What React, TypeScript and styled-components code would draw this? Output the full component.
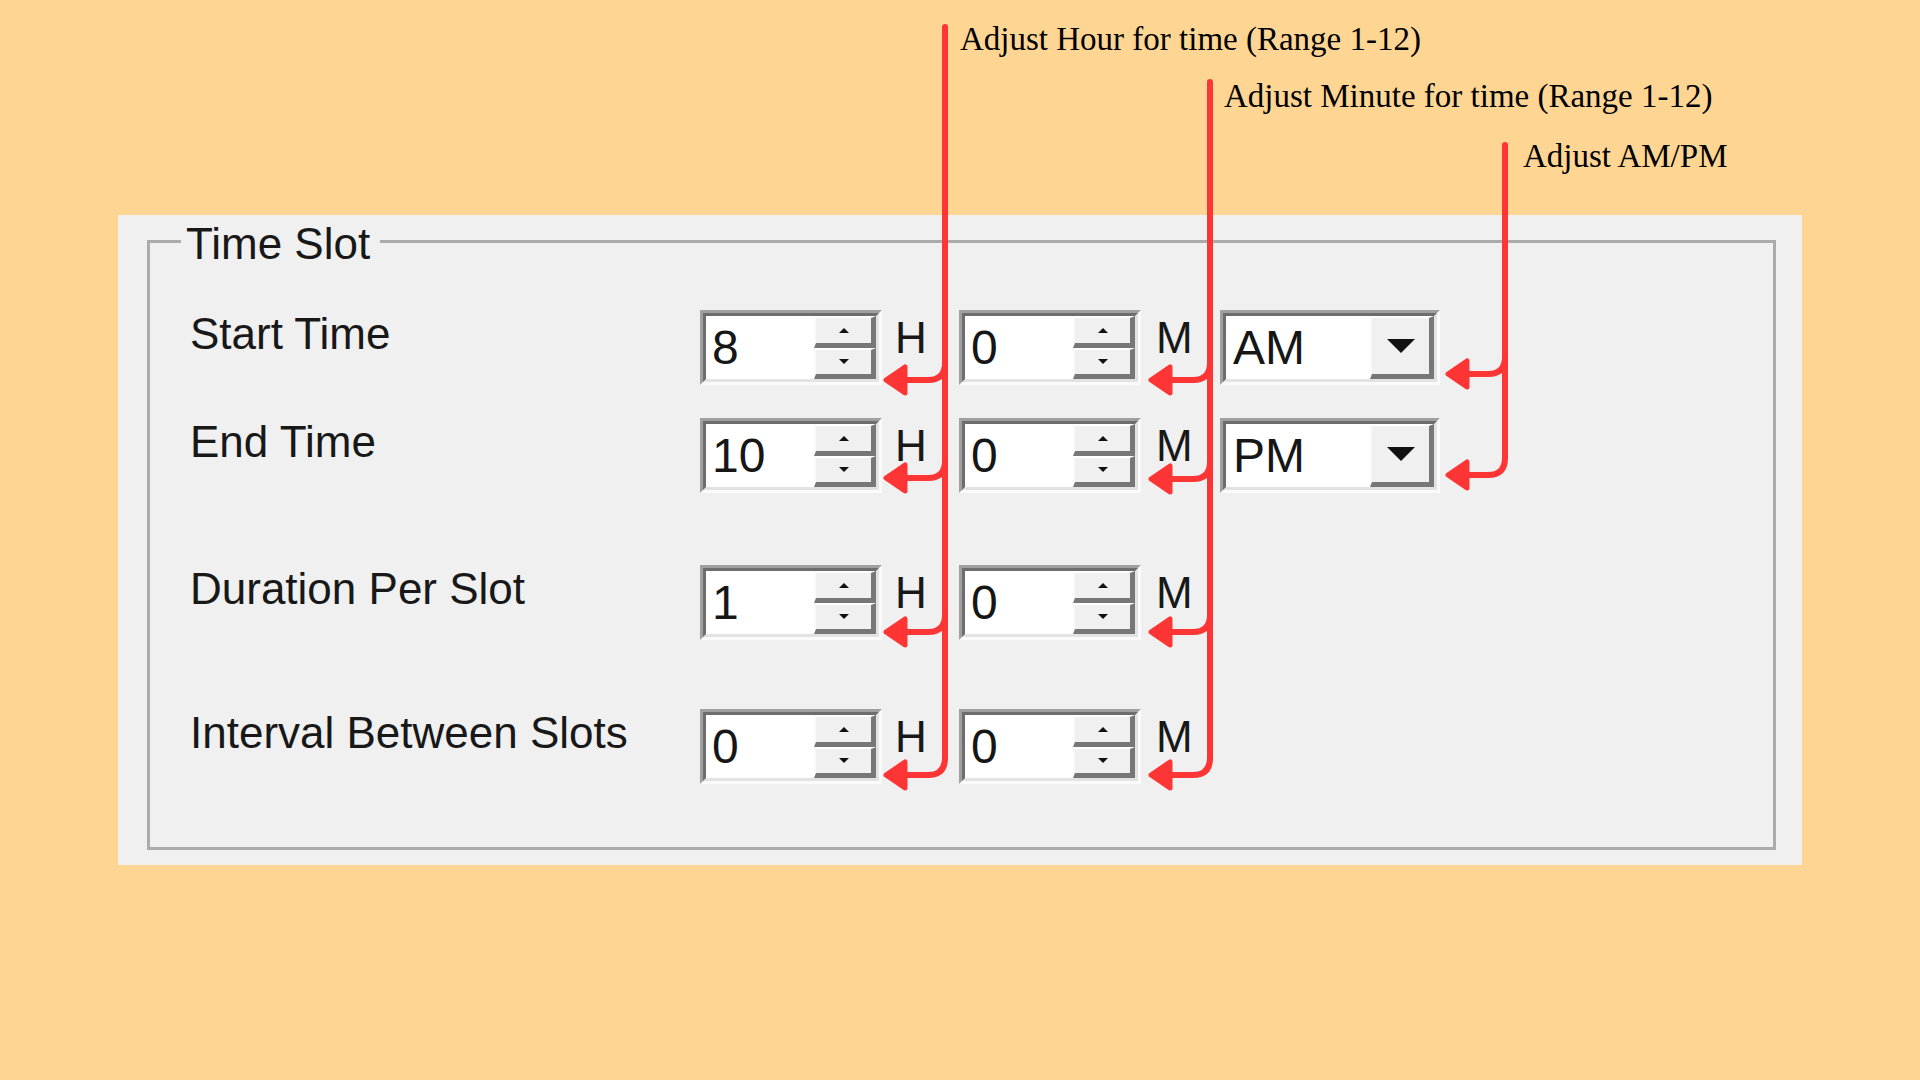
import React from "react";
import styled, { createGlobalStyle } from "styled-components";

const GlobalStyle = createGlobalStyle`
  html, body {
    margin: 0;
    padding: 0;
    background: #ffd593;
  }
  * { box-sizing: border-box; }
`;

const RED = "#fe3535";

const Page = styled.div`
  position: relative;
  width: 1920px;
  height: 1080px;
  background: #ffd593;
  overflow: hidden;
`;

const Callouts = styled.div`
  height: 215px;
  padding-top: 20px;
  display: flex;
  flex-direction: column;
`;

const Note = styled.div<{ $indent: number; $gap: number }>`
  padding-left: ${p => p.$indent}px;
  margin-top: ${p => p.$gap}px;
  font-family: "Liberation Serif", "Times New Roman", serif;
  font-size: 33px;
  line-height: 38px;
  color: #000;
  white-space: nowrap;
`;

const Panel = styled.div`
  margin-left: 118px;
  width: 1684px;
  height: 650px;
  background: #f0f0f0;
  padding: 1px 26px 15px 29px;
`;

const Group = styled.fieldset`
  margin: 0;
  padding: 0 0 63px 0;
  border: 3px solid #ababab;
  min-width: 0;
`;

const Legend = styled.legend`
  margin-left: 31px;
  padding: 6px 10px 0 5px;
  font-family: "Liberation Sans", Arial, sans-serif;
  font-size: 44px;
  line-height: 44px;
  color: #181818;
`;

const Body = styled.div`
  display: flex;
  flex-direction: column;
  padding-left: 40px;
`;

const Row = styled.div<{ $gap: number }>`
  display: flex;
  align-items: flex-start;
  height: 75px;
  margin-top: ${p => p.$gap}px;
`;

const Label = styled.div`
  width: 510px;
  margin-top: -1px;
  font-family: "Liberation Sans", Arial, sans-serif;
  font-size: 44px;
  line-height: 50px;
  color: #181818;
  white-space: nowrap;
`;

const SunkenOuter = styled.div<{ $width: number }>`
  width: ${p => p.$width}px;
  height: 75px;
  border-style: solid;
  border-width: 3px;
  border-color: #a0a0a0 #fbfbfb #fbfbfb #a0a0a0;
`;

const SunkenInner = styled.div`
  display: flex;
  height: 100%;
  border-style: solid;
  border-width: 3px;
  border-color: #6d6d6d #e3e3e3 #e3e3e3 #6d6d6d;
  background: #fff;
`;

const Value = styled.div`
  flex: 1;
  padding-left: 6px;
  font-family: "Liberation Sans", Arial, sans-serif;
  font-size: 48px;
  line-height: 63px;
  color: #161616;
`;

const SpinColumn = styled.div`
  width: 62px;
  display: flex;
  flex-direction: column;
`;

const RaisedButton = styled.div<{ $width?: number }>`
  flex: 1;
  ${p => (p.$width ? `width: ${p.$width}px; flex: none;` : "")}
  display: flex;
  align-items: center;
  justify-content: center;
  background: #f0f0f0;
  border-style: solid;
  border-width: 2px 5px 5px 2px;
  border-color: #ffffff #777777 #777777 #fafafa;
`;

const Arrow = styled.span<{ $dir: "up" | "down"; $size: number; $h: number }>`
  width: 0;
  height: 0;
  border-left: ${p => p.$size}px solid transparent;
  border-right: ${p => p.$size}px solid transparent;
  ${p =>
    p.$dir === "up"
      ? `border-bottom: ${p.$h}px solid #111;`
      : `border-top: ${p.$h}px solid #111;`}
`;

const Unit = styled.div<{ $gap: number }>`
  width: 64px;
  margin-left: ${p => p.$gap}px;
  margin-top: 3px;
  font-family: "Liberation Sans", Arial, sans-serif;
  font-size: 44px;
  line-height: 50px;
  color: #181818;
`;

const ComboText = styled(Value)`
  padding-left: 7px;
`;

const Overlay = styled.svg`
  position: absolute;
  left: 0;
  top: 0;
  pointer-events: none;
`;

function SpinBox({ value }: { value: string }) {
  return (
    <SunkenOuter $width={182}>
      <SunkenInner>
        <Value>{value}</Value>
        <SpinColumn>
          <RaisedButton>
            <Arrow $dir="up" $size={5} $h={5} />
          </RaisedButton>
          <RaisedButton>
            <Arrow $dir="down" $size={5} $h={5} />
          </RaisedButton>
        </SpinColumn>
      </SunkenInner>
    </SunkenOuter>
  );
}

function Combo({ value }: { value: string }) {
  return (
    <SunkenOuter $width={220}>
      <SunkenInner>
        <ComboText>{value}</ComboText>
        <RaisedButton $width={64}>
          <Arrow $dir="down" $size={14} $h={14} />
        </RaisedButton>
      </SunkenInner>
    </SunkenOuter>
  );
}

type Leader = { x: number; top: number; rows: number[]; tip: number };

const leaders: Leader[] = [
  { x: 945, top: 27, rows: [380, 478, 632, 775], tip: 883 },
  { x: 1210, top: 82, rows: [380, 479, 632, 775], tip: 1148 },
  { x: 1505, top: 145, rows: [374, 475], tip: 1445 },
];

function LeaderLine({ x, top, rows, tip }: Leader) {
  const r = 17;
  const back = tip + 22;
  const last = rows[rows.length - 1];
  return (
    <g>
      <path
        d={`M${x} ${top} V${last - r} Q${x} ${last} ${x - r} ${last} H${back}`}
        fill="none"
        stroke={RED}
        strokeWidth={6}
        strokeLinecap="round"
      />
      {rows.slice(0, -1).map(y => (
        <path
          key={y}
          d={`M${x} ${y - r} Q${x} ${y} ${x - r} ${y} H${back}`}
          fill="none"
          stroke={RED}
          strokeWidth={6}
          strokeLinecap="round"
        />
      ))}
      {rows.map(y => (
        <polygon
          key={"a" + y}
          points={`${tip + 3},${y} ${back},${y - 13} ${back},${y + 13}`}
          fill={RED}
          stroke={RED}
          strokeWidth={5}
          strokeLinejoin="round"
        />
      ))}
    </g>
  );
}

const rows = [
  { label: "Start Time", h: "8", m: "0", ampm: "AM", gap: 44 },
  { label: "End Time", h: "10", m: "0", ampm: "PM", gap: 33 },
  { label: "Duration Per Slot", h: "1", m: "0", gap: 72 },
  { label: "Interval Between Slots", h: "0", m: "0", gap: 69 },
];

export default function App() {
  return (
    <Page>
      <GlobalStyle />
      <Callouts>
        <Note $indent={960} $gap={0}>Adjust Hour for time (Range 1-12)</Note>
        <Note $indent={1224} $gap={19}>Adjust Minute for time (Range 1-12)</Note>
        <Note $indent={1523} $gap={22}>Adjust AM/PM</Note>
      </Callouts>
      <Panel>
        <Group>
          <Legend>Time Slot</Legend>
          <Body>
            {rows.map(row => (
              <Row key={row.label} $gap={row.gap}>
                <Label>{row.label}</Label>
                <SpinBox value={row.h} />
                <Unit $gap={13}>H</Unit>
                <SpinBox value={row.m} />
                <Unit $gap={15}>M</Unit>
                {row.ampm && <Combo value={row.ampm} />}
              </Row>
            ))}
          </Body>
        </Group>
      </Panel>
      <Overlay width={1920} height={1080} viewBox="0 0 1920 1080">
        {leaders.map(l => (
          <LeaderLine key={l.x} {...l} />
        ))}
      </Overlay>
    </Page>
  );
}
